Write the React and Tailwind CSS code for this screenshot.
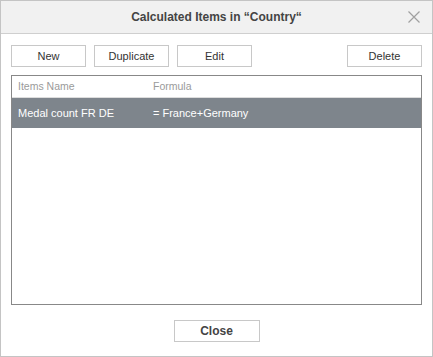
import { useState } from "react";

const btn =
  "h-[22px] w-[75px] border border-[#c8c8c8] bg-white text-[11px] text-[#333] flex items-center justify-center";

export default function App() {
  const [rows] = useState([{ name: "Medal count FR DE", formula: "= France+Germany" }]);

  return (
    <div
      className="w-[433px] h-[357px] border border-[#c4c4c4] bg-white flex flex-col"
      style={{ fontFamily: '"Liberation Sans", Arial, sans-serif' }}
    >
      <div className="h-[33px] shrink-0 bg-[#f1f1f1] border-b border-[#cfcfcf] flex items-center justify-center relative">
        <span className="text-[12px] font-bold text-[#444]">Calculated Items in “Country“</span>
        <button className="absolute right-[12px] top-[10px] w-[12px] h-[12px]">
          <svg width="12" height="12" viewBox="0 0 12 12">
            <path d="M0.5 0.5 L11.5 11.5 M11.5 0.5 L0.5 11.5" stroke="#a0a0a0" strokeWidth="1.2" />
          </svg>
        </button>
      </div>

      <div className="flex-1 flex flex-col px-[10px] pt-[11px]">
        <div className="flex gap-[8px]">
          <button className={btn}>New</button>
          <button className={btn}>Duplicate</button>
          <button className={btn}>Edit</button>
          <button className={btn + " ml-auto"}>Delete</button>
        </div>

        <div className="mt-[8px] h-[230px] border border-[#888] flex flex-col">
          <div className="h-[22px] shrink-0 flex items-center border-b border-[#ddd] text-[10.5px] text-[#9a9a9a]">
            <span className="w-[141px] pl-[6px]">Items Name</span>
            <span>Formula</span>
          </div>
          {rows.map((r) => (
            <div key={r.name} className="h-[30px] flex items-center bg-[#7e858c] text-[11px] text-white">
              <span className="w-[141px] pl-[6px]">{r.name}</span>
              <span>{r.formula}</span>
            </div>
          ))}
        </div>

        <div className="flex justify-center mt-[15px]">
          <button className="h-[22px] w-[86px] border border-[#c8c8c8] bg-white text-[12px] font-bold text-[#444]">
            Close
          </button>
        </div>
      </div>
    </div>
  );
}
